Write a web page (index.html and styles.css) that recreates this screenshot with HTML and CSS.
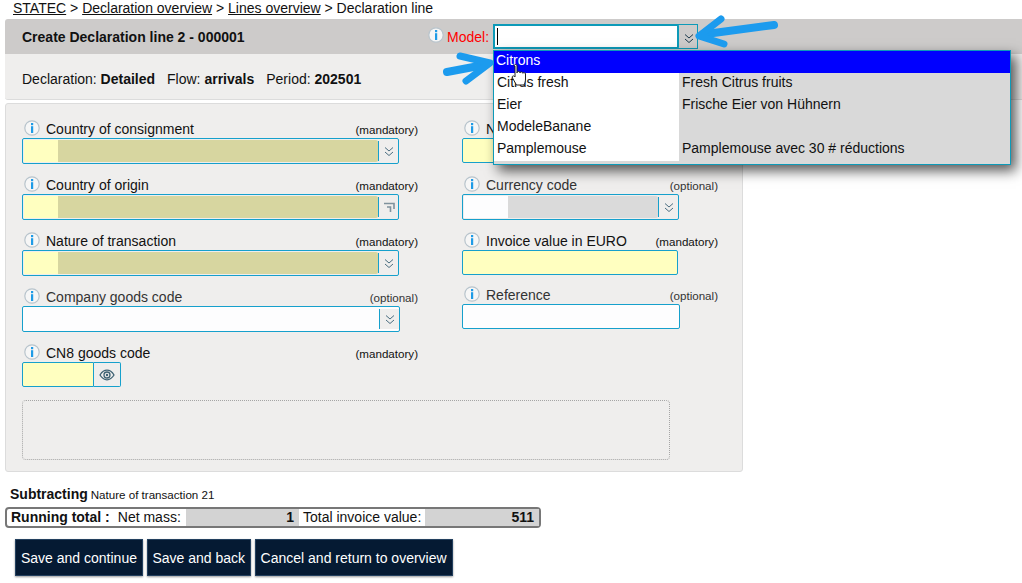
FILE: index.html
```html
<!DOCTYPE html>
<html lang="en">
<head>
<meta charset="utf-8">
<title>Declaration line</title>
<link rel="stylesheet" href="styles.css">
</head>
<body>
<svg class="defs" width="0" height="0" aria-hidden="true">
  <symbol id="info" viewBox="0 0 16 16">
    <circle cx="8" cy="8" r="7.200" fill="#f6f6f6" stroke="#b8c4cc" stroke-width="1.200"/>
    <rect x="7" y="6.200" width="2.200" height="6.800" fill="#1f9be6"/>
    <rect x="7" y="3" width="2.200" height="2.200" fill="#1f9be6"/>
  </symbol>
  <symbol id="chev" viewBox="0 0 12 12">
    <path d="M2 2.500 6 6l4-3.500M2 7l4 3.500L10 7" fill="none" stroke="currentColor" stroke-width="1"/>
  </symbol>
  <symbol id="corner" viewBox="0 0 12 12">
    <path d="M1 2.500h10V8M4 6h3.500v5" fill="none" stroke="#7f929d" stroke-width="1.600"/>
  </symbol>
</svg>

<nav class="crumbs"><a href="#">STATEC</a> &gt; <a href="#">Declaration overview</a> &gt; <a href="#">Lines overview</a> &gt; Declaration line</nav>

<header class="head">
  <h1 class="title">Create Declaration line 2 - 000001</h1>
  <div class="model">
    <svg class="info"><use href="#info"/></svg>
    <span class="model-label">Model:</span>
    <div class="model-box">
      <div class="model-input"><span class="caret"></span></div>
      <svg class="chev"><use href="#chev"/></svg>
    </div>
    <ul class="menu">
      <li class="menu-row active"><span class="menu-a">Citrons</span><span class="menu-b"></span></li>
      <li class="menu-row"><span class="menu-a">Citrus fresh</span><span class="menu-b">Fresh Citrus fruits</span></li>
      <li class="menu-row"><span class="menu-a">Eier</span><span class="menu-b">Frische Eier von Hühnern</span></li>
      <li class="menu-row"><span class="menu-a">ModeleBanane</span><span class="menu-b"></span></li>
      <li class="menu-row"><span class="menu-a">Pamplemouse</span><span class="menu-b">Pamplemouse avec 30 # réductions</span></li>
    </ul>
  </div>
</header>

<section class="meta">
  <span>Declaration: <b>Detailed</b></span>
  <span>Flow: <b>arrivals</b></span>
  <span>Period: <b>202501</b></span>
</section>

<main class="form">
  <div class="grid">
    <div class="field">
      <div class="label"><svg class="info"><use href="#info"/></svg><span class="name">Country of consignment</span><span class="req">(mandatory)</span></div>
      <div class="select"><span class="code"></span><span class="desc"></span><span class="btn"><svg class="chev"><use href="#chev"/></svg></span></div>
    </div>
    <div class="field">
      <div class="label"><svg class="info"><use href="#info"/></svg><span class="name">N</span></div>
      <div class="text req-input"></div>
    </div>
    <div class="field">
      <div class="label"><svg class="info"><use href="#info"/></svg><span class="name">Country of origin</span><span class="req">(mandatory)</span></div>
      <div class="select"><span class="code"></span><span class="desc"></span><span class="btn"><svg class="chev"><use href="#corner"/></svg></span></div>
    </div>
    <div class="field">
      <div class="label opt"><svg class="info"><use href="#info"/></svg><span class="name">Currency code</span><span class="req">(optional)</span></div>
      <div class="select currency"><span class="code"></span><span class="desc"></span><span class="btn"><svg class="chev"><use href="#chev"/></svg></span></div>
    </div>
    <div class="field">
      <div class="label"><svg class="info"><use href="#info"/></svg><span class="name">Nature of transaction</span><span class="req">(mandatory)</span></div>
      <div class="select"><span class="code"></span><span class="desc"></span><span class="btn"><svg class="chev"><use href="#chev"/></svg></span></div>
    </div>
    <div class="field">
      <div class="label"><svg class="info"><use href="#info"/></svg><span class="name">Invoice value in EURO</span><span class="req">(mandatory)</span></div>
      <div class="text req-input"></div>
    </div>
    <div class="field">
      <div class="label opt"><svg class="info"><use href="#info"/></svg><span class="name">Company goods code</span><span class="req">(optional)</span></div>
      <div class="select blank"><span class="desc"></span><span class="btn"><svg class="chev"><use href="#chev"/></svg></span></div>
    </div>
    <div class="field raised">
      <div class="label opt"><svg class="info"><use href="#info"/></svg><span class="name">Reference</span><span class="req">(optional)</span></div>
      <div class="text wide"></div>
    </div>
    <div class="field">
      <div class="label"><svg class="info"><use href="#info"/></svg><span class="name">CN8 goods code</span><span class="req">(mandatory)</span></div>
      <div class="lookup">
        <span class="lookup-input"></span>
        <span class="lookup-btn">
          <svg width="16" height="12" viewBox="0 0 16 12"><path d="M1 6c2-3.200 4.300-4.800 7-4.800S13 2.800 15 6c-2 3.200-4.300 4.800-7 4.800S3 9.200 1 6Z" fill="none" stroke="#3d6072" stroke-width="1.300"/><circle cx="8" cy="6" r="3" fill="none" stroke="#3d6072" stroke-width="1.300"/><circle cx="8" cy="6" r="1.200" fill="#3d6072"/></svg>
        </span>
      </div>
    </div>
  </div>
  <div class="dotted"></div>
</main>

<p class="note"><b>Subtracting</b> <small>Nature of transaction 21</small></p>

<div class="totals">
  <div class="t-label"><b>Running total :</b><span>Net mass:</span></div>
  <div class="t-val">1</div>
  <div class="t-label second">Total invoice value:</div>
  <div class="t-val">511</div>
</div>

<div class="actions">
  <button class="action" type="button">Save and continue</button>
  <button class="action tight" type="button">Save and back</button>
  <button class="action" type="button">Cancel and return to overview</button>
</div>

<svg class="overlay" width="1022" height="100" viewBox="0 0 1022 100" aria-hidden="true">
  <g fill="none" stroke="#1c9bee" stroke-linecap="round" stroke-linejoin="round">
    <path d="M774 25 706 34" stroke-width="8"/>
    <path d="M721 19 699 36 724 44" stroke-width="7"/>
    <path d="M447 72 484 65" stroke-width="8"/>
    <path d="M460 56 490 63 466 81" stroke-width="7"/>
  </g>
  <path d="M514 66c0-2 3-2 3 0v7c0-2 3-2 3 0 0-1.500 2.800-1.500 2.800.3 .5-1 2.700-1 2.700 .7v5c0 3-1 4-1.500 6h-7.500l-4-7c-1-2 1-3 2.500-1V66Z" fill="#fff" stroke="#222" stroke-width="1"/>
</svg>
</body>
</html>
```

FILE: styles.css
```css
* { box-sizing: border-box; }
html, body { margin: 0; padding: 0; }
body {
  position: relative;
  width: 1022px;
  height: 583px;
  overflow: hidden;
  background: #fff;
  color: #111;
  font: 14px/16px "Liberation Sans", Arial, sans-serif;
}
.defs { position: absolute; }
.crumbs { height: 19px; padding: 0 0 0 13px; line-height: 16px; }
.crumbs a { color: #111; text-decoration: underline; }

.head {
  display: flex;
  align-items: center;
  height: 35px;
  margin-left: 5px;
  padding-left: 17px;
  background: #cdcbca;
  border-radius: 3px 0 0 0;
}
.title { flex: 0 0 406px; margin: 0; font-size: 14px; font-weight: 700; }
.model { position: relative; display: flex; align-items: center; }
.info { display: block; flex: none; width: 16px; height: 16px; margin-top: -2px; }
.model .info { margin-top: -3px; }
.model-label { margin-left: 3px; width: 46px; color: #f00; }
.model-box {
  display: flex;
  align-items: center;
  width: 205px;
  height: 25px;
  border: 1px solid #0d9ab8;
}
.model-input {
  display: flex;
  align-items: center;
  width: 186px;
  height: 25px;
  margin: -1px 0 -1px -1px;
  padding-left: 2px;
  background: #fff;
  border: 2px solid #0d9ab8;
  border-radius: 2px;
}
.caret { width: 1px; height: 17px; background: #000; }
.chev { display: block; width: 12px; height: 12px; color: #4a6d80; }
.model-box .chev { margin: 3px 0 0 4px; color: #1c3a4c; }
.menu {
  position: absolute;
  top: 26px;
  left: 65px;
  width: 518px;
  height: 115px;
  margin: 0;
  padding: 0;
  list-style: none;
  background: #d9d9d9;
  border: 1px solid #0d9ab8;
  box-shadow: 5px 6px 12px rgba(0, 0, 0, .65);
  z-index: 2;
}
.menu-row { display: flex; height: 22px; line-height: 19px; }
.menu-a { width: 185px; padding-left: 3px; background: #fff; }
.menu-b { flex: 1; padding-left: 3px; }
.active { background: #00f; color: #fff; }
.active .menu-a { background: transparent; padding-left: 2px; }

.meta {
  display: flex;
  gap: 12px;
  align-items: center;
  height: 46px;
  margin-left: 5px;
  padding: 5px 0 0 17px;
  background: #efeeed;
  border-bottom: 1px solid #dcdcdc;
  border-radius: 0 0 0 3px;
}
.form {
  width: 738px;
  height: 369px;
  margin: 3px 0 0 5px;
  padding: 16px 0 0 16px;
  background: #efeeed;
  border: 1px solid #dcdcdc;
  border-radius: 3px;
}
.grid {
  display: grid;
  grid-template-columns: 396px 256px;
  column-gap: 44px;
  grid-auto-rows: 56px;
}
.raised { margin-top: -2px; }
.label { display: flex; align-items: center; height: 18px; padding-left: 2px; }
.name { margin-left: 6px; }
.req { margin-left: auto; padding-top: 2px; font-size: 11.600px; }
.opt .name, .opt .req { color: #333; }

.select {
  display: flex;
  align-items: center;
  width: 377px;
  height: 26px;
  padding: 1px 0 1px 1px;
  background: #efeeed;
  border: 1px solid #16a0cc;
  border-radius: 2px;
}
.code { width: 34px; height: 22px; background: #ffffc0; }
.desc { width: 320px; height: 22px; background: #d7d6a0; border-radius: 0 2px 2px 0; }
.btn {
  display: flex;
  align-items: center;
  justify-content: center;
  flex: 1;
  height: 20px;
  background: #efeeed;
  border-left: 1px solid #16a0cc;
}
.currency { width: 217px; }
.currency .code { width: 44px; background: #fdfdfe; }
.currency .desc { width: 150px; background: #dadada; }
.blank { width: 378px; background: #fdfdfe; }
.blank .desc { width: 355px; background: #fdfdfe; }
.text {
  width: 218px;
  height: 25px;
  background: #fdfdfe;
  border: 1px solid #16a0cc;
  border-radius: 2px;
}
.req-input { width: 216px; background: #ffffc0; }
.lookup { display: flex; width: 99px; height: 25px; }
.lookup-input {
  width: 72px;
  background: #ffffc0;
  border: 1px solid #16a0cc;
  border-radius: 2px 0 0 2px;
}
.lookup-btn {
  display: flex;
  align-items: center;
  justify-content: center;
  flex: 1;
  border: 1px solid #16a0cc;
  border-left: 0;
  border-radius: 0 2px 2px 0;
}
.dotted {
  width: 648px;
  height: 60px;
  border: 1px dotted #a5a5a5;
  border-radius: 4px;
}
.note { height: 16px; margin: 14px 0 0 10px; }
.note small { margin-left: -1px; font-size: 11.600px; }
.totals {
  display: grid;
  grid-template-columns: 179px 113px 126px 114px;
  width: 536px;
  height: 21px;
  margin: 5px 0 0 5px;
  background: #fff;
  border: 2px solid #777;
  border-radius: 4px;
  line-height: 17px;
}
.t-label { padding-left: 4px; }
.t-label span { margin-left: 8px; }
.t-val { padding-right: 5px; background: #d3d3d3; font-weight: 700; text-align: right; }
.actions { display: flex; gap: 4px; margin: 11px 0 0 15px; }
.action {
  height: 37px;
  padding: 0 5px;
  background: #051a33;
  border: 1px solid #23405f;
  box-shadow: 0 1px 2px rgba(0, 0, 0, .4);
  color: #fff;
  font: 14px "Liberation Sans", Arial, sans-serif;
}
.tight { padding: 0 4.500px; }
.overlay { position: absolute; top: 0; left: 0; z-index: 3; pointer-events: none; }
```
